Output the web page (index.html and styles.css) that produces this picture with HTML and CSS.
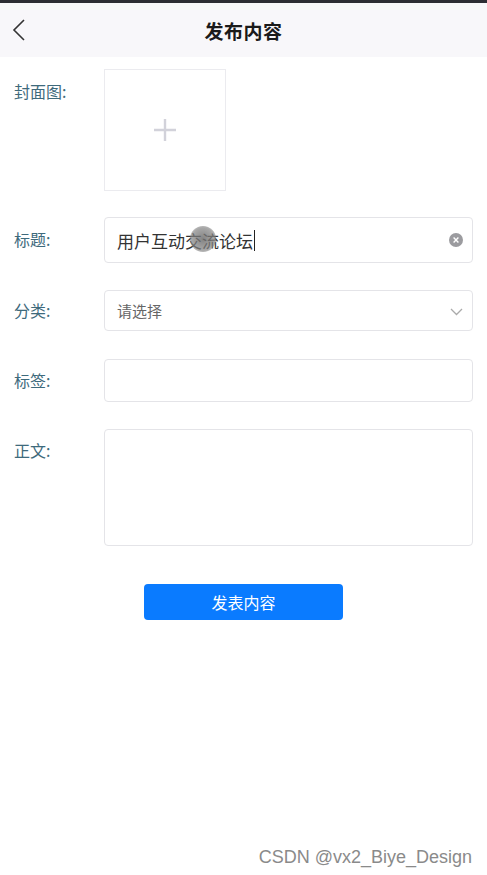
FILE: index.html
```html
<!DOCTYPE html>
<html lang="zh">
<head>
<meta charset="utf-8">
<link rel="stylesheet" href="styles.css">
</head>
<body>
<div class="topbar"></div>
<header class="header">
  <svg class="back" width="14" height="22" viewBox="0 0 14 22"><path d="M12 1 L2 11 L12 21" fill="none" stroke="#333" stroke-width="1.6"/></svg>
  <h1 class="title">发布内容</h1>
</header>
<main class="form">
  <div class="row row-cover">
    <label class="label">封面图:</label>
    <div class="cover">
      <svg width="22" height="22" viewBox="0 0 22 22"><path d="M11 0V22M0 11H22" stroke="#d2d2da" stroke-width="2.4"/></svg>
    </div>
  </div>
  <div class="row row-title">
    <label class="label">标题:</label>
    <div class="field field-title">
      <span class="value">用户互动交流论坛</span><span class="caret"></span>
      <span class="touch"></span>
      <svg class="clear" width="14" height="14" viewBox="0 0 14 14"><circle cx="7" cy="7" r="7" fill="#9b9b9f"/><path d="M4.6 4.6L9.4 9.4M9.4 4.6L4.6 9.4" stroke="#fff" stroke-width="1.4"/></svg>
    </div>
  </div>
  <div class="row row-cat">
    <label class="label">分类:</label>
    <div class="field field-select">
      <span class="placeholder">请选择</span>
      <svg class="chev" width="13" height="8" viewBox="0 0 13 8"><path d="M1 1L6.5 6.5L12 1" fill="none" stroke="#aaa" stroke-width="1.3"/></svg>
    </div>
  </div>
  <div class="row row-tag">
    <label class="label">标签:</label>
    <div class="field field-tag"></div>
  </div>
  <div class="row row-body">
    <label class="label">正文:</label>
    <div class="field field-body"></div>
  </div>
  <div class="actions">
    <button class="submit">发表内容</button>
  </div>
</main>
<div class="watermark">CSDN @vx2_Biye_Design</div>
</body>
</html>
```
FILE: styles.css
```css
* { box-sizing: border-box; }
html, body { margin: 0; padding: 0; }
body {
  width: 487px;
  height: 875px;
  background: #fff;
  font-family: "Noto Sans CJK SC", "Noto Sans", sans-serif;
  position: relative;
  overflow: hidden;
}
.topbar { height: 3px; background: #2c2c34; }
.header {
  height: 54px;
  background: #f8f7fa;
  display: flex;
  align-items: center;
  justify-content: center;
  position: relative;
}
.back { position: absolute; left: 12px; top: 16px; }
.title {
  margin: 0;
  font-size: 19px;
  font-weight: 700;
  color: #1a1a1a;
  letter-spacing: 0.5px;
}
.form { padding: 12px 14px 0 14px; }
.row { display: flex; }
.label {
  width: 90px;
  flex: none;
  font-size: 16px;
  color: #3e6a7c;
  line-height: 20px;
}
.row-cover { height: 121px; }
.row-cover .label { padding-top: 12px; }
.cover {
  width: 122px;
  height: 122px;
  border: 1px solid #ebebef;
  display: flex;
  align-items: center;
  justify-content: center;
}
.field {
  flex: 1;
  border: 1px solid #e4e4e8;
  border-radius: 4px;
  background: #fff;
  display: flex;
  align-items: center;
  position: relative;
}
.row-title { margin-top: 27px; }
.row-title .label { padding-top: 12px; }
.field-title { height: 46px; padding: 0 12px; }
.value { font-size: 17px; color: #333; }
.caret { width: 1px; height: 21px; background: #222; margin-left: 1px; }
.touch {
  position: absolute;
  left: 85px; top: 8px;
  width: 26px; height: 26px;
  border-radius: 50%;
  background: radial-gradient(circle, rgba(110,110,110,0.85) 0%, rgba(130,130,130,0.7) 60%, rgba(160,160,160,0.3) 100%);
}
.clear { position: absolute; right: 9px; top: 15px; }
.row-cat { margin-top: 27px; }
.row-cat .label { padding-top: 10px; }
.field-select { height: 41px; padding: 0 12px; }
.placeholder { font-size: 15px; color: #666; }
.chev { position: absolute; right: 9px; top: 17px; }
.row-tag { margin-top: 28px; }
.row-tag .label { padding-top: 11px; }
.field-tag { height: 43px; }
.row-body { margin-top: 27px; }
.row-body .label { padding-top: 11px; }
.field-body { height: 117px; }
.actions { display: flex; justify-content: center; margin-top: 38px; }
.submit {
  width: 199px;
  height: 36px;
  border: none;
  border-radius: 4px;
  background: #0a7bff;
  color: #fff;
  font-family: "Noto Sans CJK SC", sans-serif;
  font-size: 16px;
  padding: 0;
}
.watermark {
  position: absolute;
  right: 15px;
  bottom: 7px;
  font-family: "Liberation Sans", Arial, sans-serif;
  font-size: 18px;
  color: #8a8a8a;
}
```
